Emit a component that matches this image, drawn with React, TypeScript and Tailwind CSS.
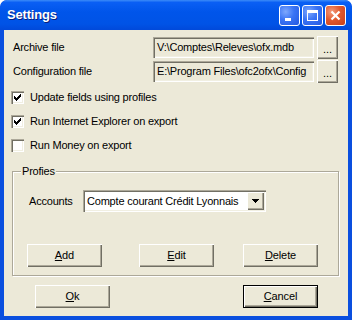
import type { ReactNode } from 'react';

const font = { fontFamily: '"Liberation Sans", Arial, sans-serif' };

function ClassicButton({ children, width = 'w-[75px]', isDefault = false }: { children: ReactNode; width?: string; isDefault?: boolean }) {
  return (
    <button
      className={`${width} h-[23px] bg-[#ECE9D8] text-[11px] tracking-[-0.1px] text-black flex items-center justify-center ${
        isDefault
          ? 'border border-black shadow-[inset_1px_1px_0_#fff,inset_-1px_-1px_0_#716F64,inset_-2px_-2px_0_#ACA899]'
          : 'shadow-[inset_1px_1px_0_#fff,inset_-1px_-1px_0_#716F64,inset_-2px_-2px_0_#ACA899]'
      }`}
    >
      {children}
    </button>
  );
}

function Sunken({ className, children }: { className: string; children?: ReactNode }) {
  return (
    <div
      className={`${className} shadow-[inset_1px_1px_0_#ACA899,inset_2px_2px_0_#716F64,inset_-1px_-1px_0_#fff,inset_-2px_-2px_0_#F1EFE2]`}
    >
      {children}
    </div>
  );
}

function Checkbox({ checked, label }: { checked: boolean; label: string }) {
  return (
    <div className="h-[24px] flex items-center pl-[7px]">
      <Sunken className="w-[13px] h-[13px] bg-white flex items-center justify-center">
        {checked && (
          <svg width="7" height="7" viewBox="0 0 7 7" shapeRendering="crispEdges">
            <path d="M0 2h1v3h-1zM1 3h1v3h-1zM2 4h1v3h-1zM3 3h1v3h-1zM4 2h1v3h-1zM5 1h1v3h-1zM6 0h1v3h-1z" fill="#000" />
          </svg>
        )}
      </Sunken>
      <span className="ml-[6px] text-[11px] tracking-[-0.2px] text-black leading-none">{label}</span>
    </div>
  );
}

function FileRow({ label, value, className = '' }: { label: string; value: string; className?: string }) {
  return (
    <div className={`flex items-center h-[21px] ${className}`}>
      <span className="w-[149px] pl-[9px] text-[11px] tracking-[-0.2px] text-black">{label}</span>
      <Sunken className="w-[161px] h-[21px] bg-[#ECE9D8] flex items-center pl-[4px] overflow-hidden whitespace-nowrap">
        <span className="text-[11px] tracking-[-0.2px] text-black">{value}</span>
      </Sunken>
      <div className="ml-[3px]">
        <ClassicButton width="w-[21px]">
          <span className="text-[11px] leading-none pt-[4px]">...</span>
        </ClassicButton>
      </div>
    </div>
  );
}

function TitleButton({ kind }: { kind: 'min' | 'max' | 'close' }) {
  const bg =
    kind === 'close'
      ? 'bg-[radial-gradient(circle_at_30%_30%,#F39B7D_0%,#E2592E_45%,#C7401B_100%)]'
      : 'bg-[radial-gradient(circle_at_30%_30%,#7EA8FD_0%,#3A74F5_45%,#2559E0_100%)]';
  return (
    <div className={`w-[21px] h-[21px] rounded-[3px] border border-white ${bg} flex items-center justify-center`}>
      <svg width="13" height="13" viewBox="0 0 13 13" shapeRendering="crispEdges">
        {kind === 'min' && <rect x="2" y="9" width="6" height="3" fill="#fff" />}
        {kind === 'max' && (
          <path d="M1 1h11v11h-11zM2 4v7h9v-7z" fill="#fff" fillRule="evenodd" />
        )}
        {kind === 'close' && (
          <path d="M2.5 2.5L10.5 10.5M10.5 2.5L2.5 10.5" stroke="#fff" strokeWidth="2.2" shapeRendering="auto" />
        )}
      </svg>
    </div>
  );
}

export default function App() {
  return (
    <div style={font} className="w-[352px] h-[320px] bg-[#0A4FDF] rounded-t-[7px] flex flex-col overflow-hidden">
      {/* Title bar */}
      <div className="h-[30px] shrink-0 rounded-t-[7px] bg-[linear-gradient(to_bottom,#3C8CF8_0%,#0A5FF4_8%,#0055EA_40%,#0053E6_80%,#0149DA_100%)] flex items-center pl-[7px] pr-[6px]">
        <span className="text-white font-bold text-[13px] tracking-[-0.2px] [text-shadow:1px_1px_0_#0A1E7A]">Settings</span>
        <div className="ml-auto flex gap-[2px]">
          <TitleButton kind="min" />
          <TitleButton kind="max" />
          <TitleButton kind="close" />
        </div>
      </div>

      {/* Client area */}
      <div className="mx-[4px] mb-[4px] flex-1 bg-[#ECE9D8] flex flex-col pt-[7px]">
        <FileRow label="Archive file" value="V:\Comptes\Releves\ofx.mdb" />
        <FileRow label="Configuration file" value="E:\Program Files\ofc2ofx\Config" className="mt-[3px]" />

        <div className="mt-[3px]">
          <Checkbox checked label="Update fields using profiles" />
          <Checkbox checked label="Run Internet Explorer on export" />
          <Checkbox checked={false} label="Run Money on export" />
        </div>

        {/* Profiles group */}
        <div className="relative mt-[14px] ml-[8px] w-[327px] h-[105px] border border-[#ACA899] shadow-[inset_1px_1px_0_#fff,1px_1px_0_#fff] flex flex-col">
          <span className="absolute -top-[8px] left-[8px] px-[1px] bg-[#ECE9D8] text-[11px] tracking-[-0.2px] leading-[15px] text-black">Profies</span>
          <div className="mt-[18px] flex items-center">
            <span className="w-[70px] pl-[16px] text-[11px] tracking-[-0.2px] text-black">Accounts</span>
            <Sunken className="w-[183px] h-[22px] bg-white flex items-center pl-[4px] pr-[2px]">
              <span className="text-[11px] tracking-[-0.2px] text-black flex-1 whitespace-nowrap">Compte courant Crédit Lyonnais</span>
              <div className="w-[17px] h-[18px] bg-[#ECE9D8] shadow-[inset_1px_1px_0_#fff,inset_-1px_-1px_0_#716F64,inset_-2px_-2px_0_#ACA899] flex items-center justify-center">
                <svg width="7" height="4" viewBox="0 0 7 4" shapeRendering="crispEdges">
                  <path d="M0 0h7v1h-1v1h-1v1h-1v1h-1v-1h-1v-1h-1v-1h-1z" fill="#000" />
                </svg>
              </div>
            </Sunken>
          </div>
          <div className="mt-[32px] flex">
            <div className="ml-[14px]">
              <ClassicButton>
                <span><u>A</u>dd</span>
              </ClassicButton>
            </div>
            <div className="ml-[37px]">
              <ClassicButton>
                <span><u>E</u>dit</span>
              </ClassicButton>
            </div>
            <div className="ml-[29px]">
              <ClassicButton>
                <span><u>D</u>elete</span>
              </ClassicButton>
            </div>
          </div>
        </div>

        <div className="mt-[9px] flex">
          <div className="ml-[31px]">
            <ClassicButton>
              <span><u>O</u>k</span>
            </ClassicButton>
          </div>
          <div className="ml-[133px]">
            <ClassicButton isDefault>
              <span><u>C</u>ancel</span>
            </ClassicButton>
          </div>
        </div>
      </div>
    </div>
  );
}
